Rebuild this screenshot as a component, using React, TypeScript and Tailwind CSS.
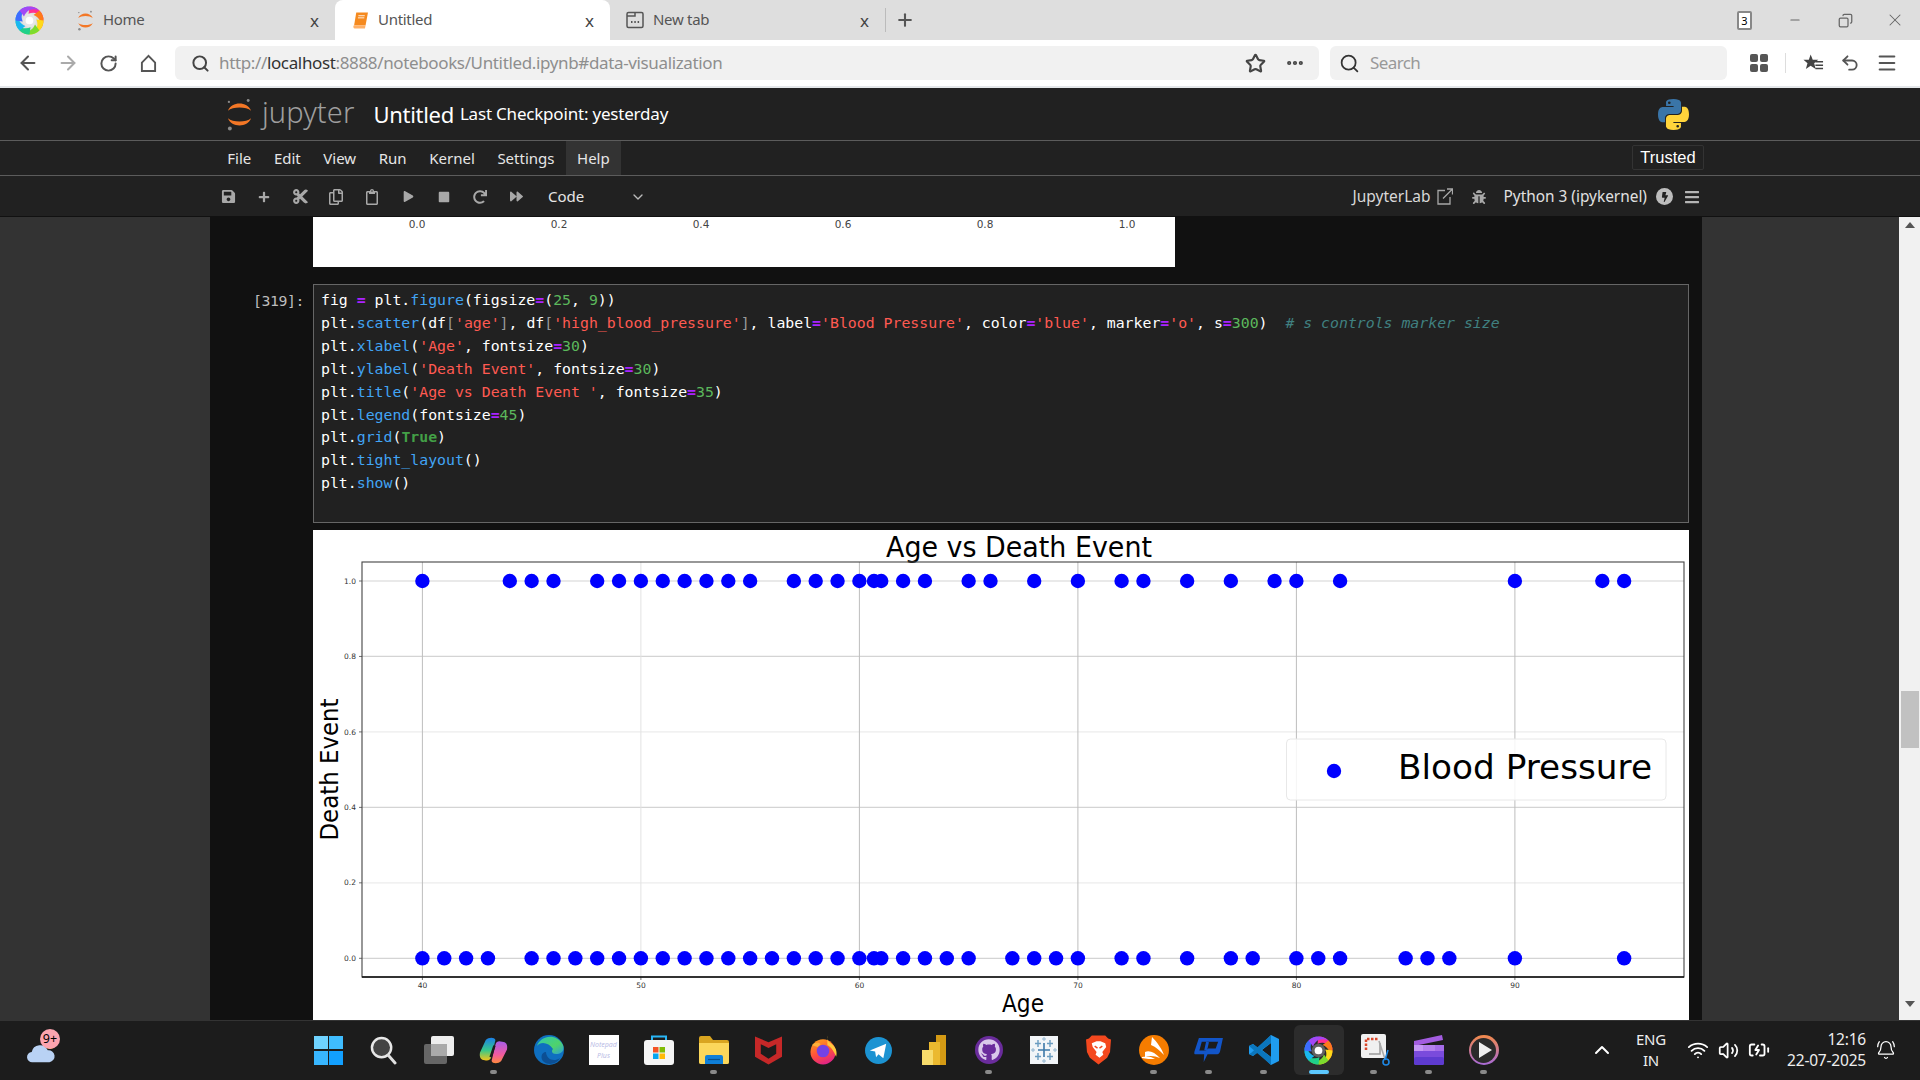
import type { ReactNode } from 'react';
import {
  ArrowLeft, ArrowRight, RotateCw, Search, Star, MoreHorizontal, Undo2, Menu, Plus, ChevronDown,
  ChevronUp, Wifi, Volume2, BatteryCharging, Minus, X, Copy, BellRing,
} from 'lucide-react';
import {
  FaSave, FaPlus, FaCut, FaRegCopy, FaRegClipboard, FaPlay, FaStop, FaRedo, FaForward,
  FaBug, FaBars, FaBolt, FaGithub,
} from 'react-icons/fa';

const TOP_AGES = [40, 44, 45, 46, 48, 49, 50, 51, 52, 53, 54, 55, 57, 58, 59, 60, 60.667, 61, 62, 63, 65, 66, 68, 70, 72, 73, 75, 77, 79, 80, 82, 90, 94, 95];
const BOTTOM_AGES = [40, 41, 42, 43, 45, 46, 47, 48, 49, 50, 51, 52, 53, 54, 55, 56, 57, 58, 59, 60, 60.667, 61, 62, 63, 64, 65, 67, 68, 69, 70, 72, 73, 75, 77, 78, 80, 81, 82, 85, 86, 87, 90, 95];
const X_TICKS = [40, 50, 60, 70, 80, 90];
const Y_TICKS = [1, 0.8, 0.6, 0.4, 0.2, 0];
const SWIRL_COLORS = ['#ff2f92', '#ff7a1a', '#ffd91a', '#7ddc2e', '#1fd08a', '#19b8f0', '#3d6cff', '#a347f5'];

const ageX = (age: number) => 109.4 + (age - 40) * 21.85;
const valY = (v: number) => 428.3 - v * 377.3;

const JupyterArcs = ({ className }: { className: string }) => (
  <svg viewBox="0 0 28 34" className={className}>
    <path d="M2 13 C6 3 22 3 26 13 C21 8.500 7 8.500 2 13Z" fill="#f37726" />
    <path d="M2 21 C6 31 22 31 26 21 C21 25.500 7 25.500 2 21Z" fill="#f37726" />
    <circle cx="23" cy="2.500" r="1.500" fill="#8a8a8a" />
    <circle cx="3" cy="4" r="1.200" fill="#8a8a8a" />
    <circle cx="4" cy="31.500" r="2" fill="#8a8a8a" />
  </svg>
);

const Swirl = ({ className }: { className: string }) => (
  <svg viewBox="0 0 30 30" className={className}>
    {SWIRL_COLORS.map((c, i) => (
      <path key={c} transform={`rotate(${i * 45} 15 15)`} d="M15 0.500 A14.500 14.500 0 0 1 29.500 15 A11 11 0 0 0 14 8 Z" fill={c} />
    ))}
    <circle cx="15" cy="15" r="7" fill="#fff" fillOpacity="0.25" />
    <circle cx="15" cy="15" r="4" fill="#fff" />
  </svg>
);

const Tab = ({ icon, label, active }: { icon: ReactNode; label: string; active?: boolean }) => (
  <div className={`w-[275px] h-10 flex items-center pl-[16px] pr-[16px] ${active ? 'bg-white rounded-t-lg' : ''}`}>
    <div className="w-[18px] h-[22px] flex items-center justify-center">{icon}</div>
    <span className="ml-[9px] mb-[1px] text-[15px] text-[#555] tracking-[-0.3px]">{label}</span>
    <span className="ml-auto text-[17px] text-[#444] leading-none">x</span>
  </div>
);

const TabBar = () => (
  <div className="h-10 bg-[#dedede] flex items-center shrink-0">
    <div className="w-[60px] pl-[15px]">
      <Swirl className="w-[29px] h-[29px]" />
    </div>
    <Tab label="Home" icon={<JupyterArcs className="w-[17px] h-[21px]" />} />
    <Tab active label="Untitled" icon={
      <svg viewBox="0 0 16 16" className="w-[17px] h-[17px]">
        <path d="M4 0.500h11l-2.200 12H2z" fill="#f58a1f" />
        <path d="M2 12.500h10.800l-.6 3H2.400C1 15.500 1 12.500 2 12.500z" fill="#ffb066" />
        <path d="M6 3.500h6M5.600 5.500h6" stroke="#fff" strokeWidth="0.8" />
      </svg>
    } />
    <Tab label="New tab" icon={
      <svg viewBox="0 0 18 18" className="w-[18px] h-[18px]" fill="none" stroke="#555" strokeWidth="1.5">
        <rect x="1" y="1.500" width="16" height="15" rx="1.500" />
        <path d="M1 5h8v-3" />
        <path d="M5 11h1.500M8.300 11h1.500M11.600 11h1.500" strokeWidth="2" />
      </svg>
    } />
    <div className="w-px h-[24px] bg-[#bbb]" />
    <Plus className="ml-[9px] w-[20px] h-[20px] text-[#555]" strokeWidth={2.5} />
    <div className="flex-1" />
    <div className="w-[15px] h-[19px] border-2 border-[#888] rounded-[2px] bg-white text-[11px] leading-[15px] text-center text-black">3</div>
    <Minus className="ml-[36px] w-[14px] h-[14px] text-[#666]" />
    <Copy className="ml-[36px] w-[15px] h-[15px] text-[#666] -scale-x-100" />
    <X className="ml-[32px] mr-[15px] w-[20px] h-[20px] text-[#666]" strokeWidth={1.25} />
  </div>
);

const NavBar = () => (
  <div className="h-[46px] bg-white flex items-center pl-2 shrink-0 text-[#555]">
    <div className="w-10 flex justify-center"><ArrowLeft className="w-[22px] h-[22px]" strokeWidth={2.2} /></div>
    <div className="w-10 flex justify-center"><ArrowRight className="w-[22px] h-[22px] text-[#aaa]" strokeWidth={2.2} /></div>
    <div className="w-10 flex justify-center"><RotateCw className="w-[19px] h-[19px]" strokeWidth={2.5} /></div>
    <div className="w-10 flex justify-center">
      <svg viewBox="0 0 18 20" className="w-[17px] h-[19px]" fill="none" stroke="#555" strokeWidth="2"><path d="M2 9l7-7 7 7v9H2z" /></svg>
    </div>
    <div className="ml-[7px] w-[1144px] h-[34px] bg-[#f1f1f1] rounded-md flex items-center pl-4">
      <Search className="w-[19px] h-[19px] text-[#444]" strokeWidth={2.5} />
      <span className="ml-[9px] text-[17px] tracking-[-0.36px] text-[#8e8e8e]">http://<span className="text-[#333]">localhost</span>:8888/notebooks/Untitled.ipynb#data-visualization</span>
      <div className="flex-1" />
      <Star className="w-[21px] h-[21px] text-[#444]" strokeWidth={2.5} />
      <MoreHorizontal className="ml-[19px] mr-[14px] w-[20px] h-[20px] text-[#444]" strokeWidth={3} />
    </div>
    <div className="ml-[11px] w-[397px] h-[34px] bg-[#f1f1f1] rounded-md flex items-center pl-[9px]">
      <Search className="w-[21px] h-[21px] text-[#333] " strokeWidth={2} />
      <span className="ml-[10px] text-[17px] tracking-[-0.6px] text-[#999]">Search</span>
    </div>
    <div className="ml-[23px] w-[18px] h-[18px] grid grid-cols-2 gap-[2px]">
      <div className="bg-[#555] rounded-[2px]" />
      <div className="bg-[#555] rounded-[2px]" />
      <div className="bg-[#555] rounded-[2px]" />
      <div className="bg-[#555] rounded-[2px]" />
    </div>
    <div className="ml-[17px] w-px h-[20px] bg-[#ddd]" />
    <svg viewBox="0 0 22 20" className="ml-[17px] w-[21px] h-[20px]" fill="#444"><path d="M8 1l2.200 5.600H16l-4.300 3.600 1.600 6-5.300-3.300L3 16.200l1.700-6L.5 6.600h5.600z" /><path d="M13 8h8v1.600h-8zM13 11.500h8v1.600h-8zM13 15h8v1.600h-8z" /></svg>
    <Undo2 className="ml-[16px] w-[20px] h-[20px]" strokeWidth={2.2} />
    <Menu className="ml-[16px] w-[22px] h-[22px]" strokeWidth={2.2} />
  </div>
);

const PythonLogo = () => (
  <svg viewBox="0 0 110 110" className="w-[31px] h-[31px]">
    <path fill="#3a75a8" d="M54.900 0C26.800 0 28.600 12.200 28.600 12.200v12.600h26.800v3.800H17.900S0 26.600 0 55s15.600 27.400 15.600 27.400h9.300V69.200s-.5-15.600 15.400-15.600h26.500s14.900.2 14.900-14.400V15S83.900 0 54.900 0zM40.100 8.500a4.800 4.800 0 1 1 0 9.600 4.800 4.800 0 0 1 0-9.600z" />
    <path fill="#ffd43b" transform="rotate(180 55 55)" d="M54.900 0C26.800 0 28.600 12.200 28.600 12.200v12.600h26.800v3.800H17.900S0 26.600 0 55s15.600 27.400 15.600 27.400h9.300V69.200s-.5-15.600 15.400-15.600h26.500s14.900.2 14.900-14.400V15S83.900 0 54.900 0zM40.100 8.500a4.800 4.800 0 1 1 0 9.600 4.800 4.800 0 0 1 0-9.600z" />
  </svg>
);

const JupyterHeader = () => (
  <div className="h-[53px] bg-[#212121] border-b border-[#5c5c5c] flex items-center pl-[226px] pr-[231px] shrink-0">
    <JupyterArcs className="w-[27px] h-[33px]" />
    <span className="ml-[9px] text-[29px] text-[#9e9e9e] font-light tracking-[0.1px] -mt-[6px] leading-none">jupyter</span>
    <span className="ml-[19px] text-[22px] text-white tracking-[-0.3px]">Untitled</span>
    <span className="ml-[6px] text-[17px] text-white tracking-[-0.2px]">Last Checkpoint: yesterday</span>
    <div className="flex-1" />
    <PythonLogo />
  </div>
);

const MENU_ITEMS = ['File', 'Edit', 'View', 'Run', 'Kernel', 'Settings', 'Help'];

const MenuBar = () => (
  <div className="h-[35px] bg-[#212121] border-b border-[#5c5c5c] flex items-stretch pl-[216px] pr-[216px] shrink-0">
    {MENU_ITEMS.map((item) => (
      <div key={item} className={`px-[11.3px] flex items-center text-[15px] text-[#e6e6e6] ${item === 'Help' ? 'bg-[#333]' : ''}`}>{item}</div>
    ))}
    <div className="flex-1" />
    <div className="mt-[4px] h-[25px] w-[72px] border border-[#333] rounded-[2px] flex items-center justify-center text-[16.5px] text-white font-['Liberation_Sans',sans-serif]">Trusted</div>
  </div>
);

const ToolBtn = ({ children }: { children: ReactNode }) => (
  <div className="w-[36px] flex justify-center text-[#a8a8a8] text-[15px]">{children}</div>
);

const JupyterToolbar = () => (
  <div className="h-[41px] bg-[#212121] border-b border-[#111] flex items-center pt-[1px] pl-[210px] pr-[220px] shrink-0">
    <ToolBtn><FaSave /></ToolBtn>
    <ToolBtn><FaPlus className="text-[12px]" /></ToolBtn>
    <ToolBtn><FaCut className="text-[17px]" /></ToolBtn>
    <ToolBtn><FaRegCopy className="text-[16px]" /></ToolBtn>
    <ToolBtn><FaRegClipboard className="text-[16px]" /></ToolBtn>
    <ToolBtn><FaPlay className="text-[11px]" /></ToolBtn>
    <ToolBtn><FaStop className="text-[12px]" /></ToolBtn>
    <ToolBtn><FaRedo className="text-[14px]" /></ToolBtn>
    <ToolBtn><FaForward className="text-[13px]" /></ToolBtn>
    <span className="ml-[14px] text-[15px] text-[#e6e6e6]">Code</span>
    <ChevronDown className="ml-[46px] w-[16px] h-[16px] text-[#bbb]" />
    <div className="flex-1" />
    <span className="text-[15.5px] text-[#d8d8d8]">JupyterLab</span>
    <svg viewBox="0 0 16 17" className="ml-[6px] w-[16px] h-[17px]" fill="none" stroke="#a8a8a8" strokeWidth="1.3"><path d="M8 2.500H1v13.500h12v-7" /><path d="M6 10.500L15 1.500M10 1h5.500v5.500" /></svg>
    <FaBug className="ml-[19px] text-[14px] text-[#a8a8a8]" />
    <span className="ml-[18px] text-[15.4px] text-[#e0e0e0]">Python 3 (ipykernel)</span>
    <span className="ml-[9px] w-[17px] h-[17px] rounded-full bg-[#bdbdbd] flex items-center justify-center"><FaBolt className="text-[10px] text-[#212121]" /></span>
    <FaBars className="ml-[11px] text-[16px] text-[#b5b5b5]" />
  </div>
);

const OutputStub = () => (
  <svg viewBox="0 0 862 50" className="block w-[862px] h-[50px] bg-white">
    {[['0.0', 104], ['0.2', 246], ['0.4', 388], ['0.6', 530], ['0.8', 672], ['1.0', 814]].map(([t, x]) => (
      <text key={t} x={x} y={11} textAnchor="middle" fontSize="10.5" fill="#444" fontFamily="DejaVu Sans">{t}</text>
    ))}
  </svg>
);

const F = ({ children }: { children: ReactNode }) => <span className="text-[#42a5f5]">{children}</span>;
const S = ({ children }: { children: ReactNode }) => <span className="text-[#ff5a52]">{children}</span>;
const N = ({ children }: { children: ReactNode }) => <span className="text-[#5cb85c]">{children}</span>;
const E = () => <span className="text-[#aa22ff] font-bold">=</span>;
const B = ({ children }: { children: ReactNode }) => <span className="text-[#9a9a9a]">{children}</span>;

const CodeCell = () => (
  <div className="h-[239px] bg-[#212121] border border-[#666] pl-[7px] pt-[4px] font-['DejaVu_Sans_Mono',monospace] text-[14.83px] leading-[22.9px] text-white whitespace-pre">
    <div>fig <E /> plt.<F>figure</F>(figsize<E />(<N>25</N>, <N>9</N>))</div>
    <div>plt.<F>scatter</F>(df<B>[</B><S>'age'</S><B>]</B>, df<B>[</B><S>'high_blood_pressure'</S><B>]</B>, label<E /><S>'Blood Pressure'</S>, color<E /><S>'blue'</S>, marker<E /><S>'o'</S>, s<E /><N>300</N>)  <span className="italic text-[#408080]"># s controls marker size</span></div>
    <div>plt.<F>xlabel</F>(<S>'Age'</S>, fontsize<E /><N>30</N>)</div>
    <div>plt.<F>ylabel</F>(<S>'Death Event'</S>, fontsize<E /><N>30</N>)</div>
    <div>plt.<F>title</F>(<S>'Age vs Death Event '</S>, fontsize<E /><N>35</N>)</div>
    <div>plt.<F>legend</F>(fontsize<E /><N>45</N>)</div>
    <div>plt.<F>grid</F>(<span className="text-[#43a047] font-bold">True</span>)</div>
    <div>plt.<F>tight_layout</F>()</div>
    <div>plt.<F>show</F>()</div>
  </div>
);

const ScatterChart = () => (
  <svg viewBox="0 0 1376 490" className="block w-[1376px] h-[490px] bg-white" fontFamily="DejaVu Sans">
    <text x={706} y={27} textAnchor="middle" fontSize="27.5" textLength={266} lengthAdjust="spacingAndGlyphs">Age vs Death Event</text>
    {Y_TICKS.map((v) => (
      <g key={v}>
        <line x1={49} x2={1371} y1={valY(v)} y2={valY(v)} stroke={v === 0.6 || v === 0.2 ? '#ececec' : '#d4d4d4'} strokeWidth="1.2" />
        <line x1={46} x2={49} y1={valY(v)} y2={valY(v)} stroke="#333" strokeWidth="0.7" />
        <text x={43} y={valY(v) + 2.6} textAnchor="end" fontSize="7.5" fill="#333">{v.toFixed(1)}</text>
      </g>
    ))}
    {X_TICKS.map((a) => (
      <g key={a}>
        <line x1={ageX(a)} x2={ageX(a)} y1={32} y2={447} stroke={a === 50 ? '#e2e2e2' : '#bdbdbd'} strokeWidth="1" />
        <line x1={ageX(a)} x2={ageX(a)} y1={447} y2={450} stroke="#333" strokeWidth="0.7" />
        <text x={ageX(a)} y={458} textAnchor="middle" fontSize="7.5" fill="#333">{a}</text>
      </g>
    ))}
    {TOP_AGES.map((a) => <circle key={`t${a}`} cx={ageX(a)} cy={valY(1)} r={7.2} fill="#0000ff" />)}
    {BOTTOM_AGES.map((a) => <circle key={`b${a}`} cx={ageX(a)} cy={valY(0)} r={7.2} fill="#0000ff" />)}
    <rect x={49} y={32} width={1322} height={415} fill="none" stroke="#444" strokeWidth="1.1" />
    <line x1={49} x2={1371} y1={447} y2={447} stroke="#111" strokeWidth="1.5" />
    <rect x={973.5} y={209} width={379.5} height={61} rx={4} fill="#fff" fillOpacity="0.85" stroke="#e8e8e8" />
    <circle cx={1021} cy={241} r={7.2} fill="#0000ff" />
    <text x={1085} y={249} fontSize="34" textLength={254} lengthAdjust="spacingAndGlyphs">Blood Pressure</text>
    <text x={710} y={482} textAnchor="middle" fontSize="24" textLength={42} lengthAdjust="spacingAndGlyphs">Age</text>
    <text transform="translate(25 239.5) rotate(-90)" textAnchor="middle" fontSize="25" textLength={142} lengthAdjust="spacingAndGlyphs">Death Event</text>
  </svg>
);

const Scrollbar = () => (
  <div className="w-[21px] bg-[#f1f1f1] flex flex-col items-center shrink-0">
    <div className="mt-[5px] w-0 h-0 border-x-[5px] border-x-transparent border-b-[6px] border-b-[#555]" />
    <div className="mt-[463px] w-[18px] h-[57px] bg-[#c1c1c1]" />
    <div className="flex-1" />
    <div className="mb-[13px] w-0 h-0 border-x-[5px] border-x-transparent border-t-[6px] border-t-[#555]" />
  </div>
);

const Notebook = () => (
  <div className="flex-1 min-h-0 flex bg-[#333] overflow-hidden">
    <div className="w-[210px] shrink-0" />
    <div className="w-[1492px] shrink-0 bg-[#111] flex">
      <div className="w-[103px] shrink-0 pt-[72px] pr-[9px] text-right font-['DejaVu_Sans_Mono',monospace] text-[14.8px] leading-[23px] tracking-[-0.4px] text-[#bdbdbd]">[319]:</div>
      <div className="w-[1376px]">
        <OutputStub />
        <div className="h-[17px]" />
        <CodeCell />
        <div className="h-[7px]" />
        <ScatterChart />
      </div>
    </div>
    <div className="flex-1" />
    <Scrollbar />
  </div>
);

const TASK_ICONS: { key: string; dot?: boolean; active?: boolean; icon: ReactNode }[] = [
  { key: 'start', icon: (
    <div className="w-[29px] h-[29px] grid grid-cols-2 gap-[1.5px]">
      <div className="bg-[#6fd3ff]" /><div className="bg-[#3fbdff]" /><div className="bg-[#38b6ff]" /><div className="bg-[#12a0ff]" />
    </div>
  ) },
  { key: 'search', icon: (
    <svg viewBox="0 0 28 30" className="w-[27px] h-[29px]"><circle cx="12" cy="12" r="10" fill="#444" stroke="#e8e8e8" strokeWidth="2.5" /><path d="M19 20l7 8" stroke="#e0e0e0" strokeWidth="3" strokeLinecap="round" /></svg>
  ) },
  { key: 'taskview', icon: (
    <svg viewBox="0 0 30 28" className="w-[30px] h-[28px]"><rect x="0" y="8" width="23" height="20" rx="2" fill="#666" /><rect x="7" y="0" width="23" height="20" rx="2" fill="#eee" /><rect x="7" y="8" width="16" height="12" fill="#aaa" /></svg>
  ) },
  { key: 'copilot', dot: true, icon: (
    <svg viewBox="0 0 30 28" className="w-[29px] h-[27px]">
      <defs>
        <linearGradient id="cpa" x1="0" y1="0" x2="0" y2="1"><stop offset="0" stopColor="#1b7fe8" /><stop offset="0.55" stopColor="#37c88a" /><stop offset="1" stopColor="#f5c518" /></linearGradient>
        <linearGradient id="cpb" x1="0" y1="0" x2="0" y2="1"><stop offset="0" stopColor="#a65ce8" /><stop offset="0.6" stopColor="#f05aa0" /><stop offset="1" stopColor="#ff8a3c" /></linearGradient>
      </defs>
      <path d="M7 3C10 0 16 0 17 3L13 20C12 24 9 25 6 24 2 24 0 21 1 16z" fill="url(#cpa)" />
      <path d="M23 25C20 28 14 28 13 25L17 8C18 4 21 4 24 5 28 5 30 8 29 13z" fill="url(#cpb)" />
      <path d="M16 9L12 21" stroke="#1c1c1c" strokeWidth="2.5" />
    </svg>
  ) },
  { key: 'edge', icon: (
    <svg viewBox="0 0 30 30" className="w-[30px] h-[30px]">
      <defs><linearGradient id="edg" x1="0" y1="0" x2="1" y2="1"><stop offset="0" stopColor="#2fc9b0" /><stop offset="0.6" stopColor="#4fd36a" /><stop offset="1" stopColor="#2d9fd8" /></linearGradient></defs>
      <circle cx="15" cy="15" r="15" fill="#0f6fc0" />
      <path d="M3 11C6 1 22-3 29 10 31 16 27 19 22 19 18 19 17 16 19 14 15 7 6 6 3 11z" fill="url(#edg)" />
      <path d="M12 17c0 6 7 11 14 6-4 7-12 7-16 4-4-3-3-10 2-10z" fill="#0c4f94" />
    </svg>
  ) },
  { key: 'notepad', icon: (
    <div className="w-[30px] h-[30px] bg-white flex flex-col items-center justify-center text-[7px] leading-[11px] text-[#b9bce6] italic"><span>Notepad</span><span>Plus</span></div>
  ) },
  { key: 'store', icon: (
    <svg viewBox="0 0 30 30" className="w-[30px] h-[30px]">
      <path d="M8 5V1.500h14V5" fill="none" stroke="#29b6f6" strokeWidth="2" />
      <rect x="0" y="5" width="30" height="25" rx="3" fill="#f5f5f5" />
      <rect x="9" y="12" width="5.500" height="5.500" fill="#f35325" /><rect x="15.500" y="12" width="5.500" height="5.500" fill="#81bc06" />
      <rect x="9" y="18.500" width="5.500" height="5.500" fill="#05a6f0" /><rect x="15.500" y="18.500" width="5.500" height="5.500" fill="#ffba08" />
    </svg>
  ) },
  { key: 'explorer', dot: true, icon: (
    <svg viewBox="0 0 30 28" className="w-[30px] h-[28px]">
      <path d="M0 2a2 2 0 0 1 2-2h9l3 4h14a2 2 0 0 1 2 2v20a2 2 0 0 1-2 2H2a2 2 0 0 1-2-2z" fill="#d9a520" />
      <path d="M0 7h30v19a2 2 0 0 1-2 2H2a2 2 0 0 1-2-2z" fill="#fbd75b" />
      <path d="M6 21a2 2 0 0 1 2-2h14a2 2 0 0 1 2 2v7H6z" fill="#0f7fd8" />
      <path d="M9 23.500h12" stroke="#07518f" strokeWidth="1.2" />
    </svg>
  ) },
  { key: 'mcafee', icon: (
    <svg viewBox="0 0 28 30" className="w-[27px] h-[30px]"><path fillRule="evenodd" fill="#c62828" d="M0 1l14 6 14-6v21l-14 8-14-8zM6 9v10l8 5 8-5V9l-8 4z" /></svg>
  ) },
  { key: 'firefox', icon: (
    <svg viewBox="0 0 30 30" className="w-[29px] h-[30px]">
      <defs><linearGradient id="ffx" x1="0.2" y1="0" x2="0.6" y2="1"><stop offset="0" stopColor="#ff9f1c" /><stop offset="0.55" stopColor="#ff4f3c" /><stop offset="1" stopColor="#e0218a" /></linearGradient></defs>
      <circle cx="14.500" cy="17" r="13" fill="url(#ffx)" />
      <path d="M19 0c-1 5 2 7 6 10 4 4 4 9 3 12-2-6-6-11-9-12z" fill="#ffc83d" />
      <circle cx="14.500" cy="16" r="6.500" fill="#7542e5" />
      <path d="M3 10c3-3 7-3 9-1l-3 3z" fill="#ffb03a" />
    </svg>
  ) },
  { key: 'telegram', icon: (
    <svg viewBox="0 0 28 28" className="w-[27px] h-[27px]"><circle cx="14" cy="14" r="14" fill="#1c93d2" /><path d="M5 14L22 7l-3 15-5-4-2.500 3-1-6z" fill="#fff" /></svg>
  ) },
  { key: 'powerbi', icon: (
    <svg viewBox="0 0 24 30" className="w-[24px] h-[30px]"><rect x="14" y="0" width="10" height="30" fill="#d49a14" /><rect x="7" y="7" width="11" height="23" fill="#ebb92f" /><rect x="0" y="15" width="11" height="15" fill="#f7db6b" /></svg>
  ) },
  { key: 'github', dot: true, icon: (
    <div className="w-[28px] h-[28px] rounded-full bg-[#6a2c9c] flex items-center justify-center"><FaGithub className="text-[22px] text-[#d9c8ea]" /></div>
  ) },
  { key: 'tableau', icon: (
    <svg viewBox="0 0 28 28" className="w-[28px] h-[28px]">
      <rect width="28" height="28" fill="#f2f5f8" />
      <path d="M14 7v14M8 14h12" stroke="#3c78a8" strokeWidth="1.6" />
      <path d="M8 4v7M5 7.500h6M20 4v7M17 7.500h6M8 17v7M5 20.500h6M20 17v7M17 20.500h6" stroke="#6a9cc0" strokeWidth="1.4" />
      <path d="M14 1v4M12 3h4M14 23v4M12 25h4M3 12v4M1 14h4M25 12v4M23 14h4" stroke="#92b6d0" strokeWidth="1" />
    </svg>
  ) },
  { key: 'brave', icon: (
    <svg viewBox="0 0 26 30" className="w-[25px] h-[30px]">
      <path d="M6 0h14l3 3 3 1-1 13-3 6-9 7-9-7-3-6L0 4l3-1z" fill="#f4481e" />
      <path d="M6 8l5-2h4l5 2 1 4-4 5 1 3-4 3-4-3 1-3-4-5z" fill="#fff" />
      <path d="M9 11l3 2M17 11l-3 2" stroke="#f4481e" strokeWidth="1.5" />
    </svg>
  ) },
  { key: 'orange', dot: true, icon: (
    <svg viewBox="0 0 30 30" className="w-[30px] h-[30px]">
      <circle cx="15" cy="15" r="15" fill="#f57c00" />
      <path d="M13 2c5 5 10 12 12 18-4-4-8-8-13-10zM6 17c5-2 10 1 15 6-5-2-10-3-15-1zM3 22c4-1 9-1 13 2-4 0-9 0-13-1z" fill="#fff" />
    </svg>
  ) },
  { key: 'chat', dot: true, icon: (
    <svg viewBox="0 0 30 26" className="w-[29px] h-[25px]"><path fillRule="evenodd" fill="#1255c9" d="M5 0h25l-3 14c-.6 2-2 3-4 3H14l-4 8 .5-8H2c-2 0-2-1-1.600-3zM8 4L5.500 13h7l2-2h8L25 4z" /><path d="M14 4l-2 9" stroke="#1255c9" strokeWidth="3" /></svg>
  ) },
  { key: 'vscode', dot: true, icon: (
    <svg viewBox="0 0 30 30" className="w-[30px] h-[30px]">
      <path d="M22 0l8 4v22l-8 4-13-13-5 4-4-2v-8l4-2 5 4zM22 8l-9 7 9 7z" fill="#1f9cf0" fillRule="evenodd" />
      <path d="M22 0v8L4 21l-4-2 2-1 20-18zM4 9l18 13v8L0 11z" fill="#0b76bd" />
    </svg>
  ) },
  { key: 'swirl', active: true, icon: <Swirl className="relative w-[29px] h-[29px]" /> },
  { key: 'snip', dot: true, icon: (
    <svg viewBox="0 0 30 32" className="ml-[4px] w-[30px] h-[32px]">
      <rect width="25" height="24" rx="2" fill="#f0f0f0" />
      <path d="M5 16V5h12" fill="none" stroke="#d9472b" strokeWidth="2.5" strokeDasharray="2.500 1.500" />
      <path d="M8 20h11V9" fill="none" stroke="#999" strokeWidth="1.5" />
      <path d="M18 7l6 18" stroke="#aaa" strokeWidth="1.6" />
      <circle cx="25" cy="28" r="3" fill="none" stroke="#1e88e5" strokeWidth="1.6" />
      <path d="M27 16l-3 10" stroke="#1e88e5" strokeWidth="1.6" />
    </svg>
  ) },
  { key: 'clapper', dot: true, icon: (
    <svg viewBox="0 0 30 30" className="w-[30px] h-[30px]">
      <path d="M0 6l28-6 1 5-29 6z" fill="#a35ce0" />
      <rect y="10" width="30" height="20" rx="2" fill="#7a4bdc" />
      <rect x="9" y="10" width="12" height="6" fill="#b580ee" /><rect y="10" width="9" height="6" fill="#c596f5" /><rect x="21" y="10" width="9" height="6" fill="#a56ce8" />
      <rect y="22" width="30" height="8" rx="2" fill="#5e3bd0" />
    </svg>
  ) },
  { key: 'play', dot: true, icon: (
    <div className="w-[30px] h-[30px] rounded-full bg-[linear-gradient(180deg,#f28a4a,#a76ad8)] p-[2.5px]">
      <div className="w-full h-full rounded-full bg-[#2a2a2a] flex items-center justify-center">
        <div className="ml-[3px] w-0 h-0 border-y-[8px] border-y-transparent border-l-[13px] border-l-[#eee]" />
      </div>
    </div>
  ) },
];

const TaskButton = ({ icon, dot, active }: { icon: ReactNode; dot?: boolean; active?: boolean }) => (
  <div className="w-[55px] h-[50px] relative flex items-center justify-center">
    {active && <div className="absolute inset-y-0 left-[2.5px] w-[50px] rounded-md bg-[#2c2c2c]" />}
    {icon}
    {dot && <div className="absolute bottom-[1px] left-[24px] w-[7px] h-[4px] rounded-full bg-[#8a8a8a]" />}
    {active && <div className="absolute bottom-[1px] left-[18px] w-[20px] h-[4px] rounded-full bg-[#5cc8ff]" />}
  </div>
);

const Taskbar = () => (
  <div className="h-[60px] bg-[#1c1c1c] border-t border-[#333] flex items-center pb-[1px] shrink-0 text-[#eee]">
    <div className="w-[301px] pl-[26px] shrink-0">
      <div className="relative w-[36px] h-[36px]">
        <div className="absolute top-[5px] left-[18px] w-[12px] h-[12px] rounded-full bg-[#f59e0b]" />
        <svg viewBox="0 0 34 26" className="absolute left-0 bottom-[5px] w-[30px] h-[22px]"><path d="M7 25a6 6 0 0 1-1-12 10 10 0 0 1 19-2 7 7 0 0 1 2 14z" fill="#b9d2f4" /></svg>
        <div className="absolute -top-[3px] left-[14px] w-[20px] h-[20px] rounded-full bg-[#fda4af] text-[12.5px] leading-[20px] text-center text-black">9+</div>
      </div>
    </div>
    {TASK_ICONS.map(({ key, ...rest }) => <TaskButton key={key} {...rest} />)}
    <ChevronUp className="ml-[79px] w-[24px] h-[24px] text-white" />
    <div className="ml-[12px] w-[50px] text-center text-[15px] leading-[21px] tracking-[-0.2px]">ENG<br />IN</div>
    <Wifi className="ml-[11px] w-[22px] h-[22px] text-white" />
    <Volume2 className="ml-[9px] w-[21px] h-[21px] text-white" />
    <BatteryCharging className="ml-[9px] w-[22px] h-[22px] text-white" />
    <div className="flex-1 text-right text-[15.5px] leading-[21px] tracking-[-0.2px]">12:16<br />22-07-2025</div>
    <BellRing className="ml-[10px] mr-[24px] w-[20px] h-[20px] text-white" strokeWidth={1.5} />
  </div>
);

const App = () => (
  <div className="w-[1920px] h-[1080px] flex flex-col overflow-hidden font-['Noto_Sans',sans-serif]">
    <TabBar />
    <NavBar />
    <div className="h-[2px] bg-[#e4e7ea] shrink-0" />
    <JupyterHeader />
    <MenuBar />
    <JupyterToolbar />
    <Notebook />
    <Taskbar />
  </div>
);

export default App;
